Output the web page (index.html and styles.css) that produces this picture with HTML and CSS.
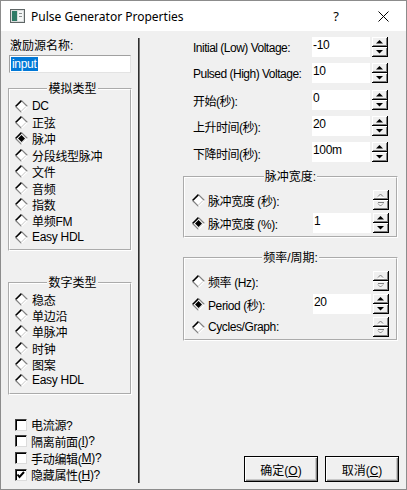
FILE: index.html
```html
<!DOCTYPE html>
<html lang="zh">
<head>
  <meta charset="UTF-8" />
  <title>Pulse Generator Properties</title>
  <link rel="stylesheet" href="styles.css">
</head>
<body>
  <svg width="0" height="0" class="defs">
    <symbol id="dia" viewBox="0 0 13 13">
      <polygon points="6.5,1 12,6.5 6.5,12 1,6.5" fill="#fff" />
      <line x1="0.6" y1="6.5" x2="6.5" y2="0.6" stroke="#000" stroke-width="1.6" />
      <line x1="6.5" y1="0.6" x2="12.4" y2="6.5" stroke="#808080" stroke-width="1.2" />
      <line x1="0.6" y1="6.5" x2="6.5" y2="12.4" stroke="#808080" stroke-width="1.2" />
      <line x1="6.5" y1="12.4" x2="12.4" y2="6.5" stroke="#fff" stroke-width="1.2" />
      <line x1="6.5" y1="11" x2="11" y2="6.5" stroke="#c8c8c8" stroke-width="1" />
    </symbol>
    <symbol id="dia-on" viewBox="0 0 13 13">
      <use href="#dia" />
      <polygon points="6.5,3 10,6.5 6.5,10 3,6.5" fill="#000" />
    </symbol>
    <symbol id="spin-on" viewBox="0 0 16 20">
      <rect x="0" y="0" width="16" height="20" fill="#000" />
      <rect x="0" y="0" width="15" height="9" fill="#fff" />
      <rect x="1" y="1" width="14" height="8" fill="#808080" />
      <rect x="1" y="1" width="13" height="7" fill="#f0f0f0" />
      <rect x="0" y="10" width="15" height="9" fill="#fff" />
      <rect x="1" y="11" width="14" height="8" fill="#808080" />
      <rect x="1" y="11" width="13" height="7" fill="#f0f0f0" />
      <polygon points="4,6.5 11,6.5 7.5,3" fill="#000" />
      <polygon points="4,13 11,13 7.5,16.5" fill="#000" />
    </symbol>
    <symbol id="spin-off" viewBox="0 0 16 20">
      <rect x="0" y="0" width="16" height="20" fill="#000" />
      <rect x="0" y="0" width="15" height="9" fill="#fff" />
      <rect x="1" y="1" width="14" height="8" fill="#808080" />
      <rect x="1" y="1" width="13" height="7" fill="#f0f0f0" />
      <rect x="0" y="10" width="15" height="9" fill="#fff" />
      <rect x="1" y="11" width="14" height="8" fill="#808080" />
      <rect x="1" y="11" width="13" height="7" fill="#f0f0f0" />
      <polyline points="5,6.5 7.5,4 10,6.5" fill="none" stroke="#808080" />
      <polyline points="5,13.5 7.5,16 10,13.5" fill="none" stroke="#808080" />
      <line x1="5" y1="7.5" x2="11" y2="7.5" stroke="#fff" />
      <line x1="5" y1="12.5" x2="11" y2="12.5" stroke="#808080" />
      <polyline points="6,13.5 7.5,15 9,13.5" fill="none" stroke="#fff" stroke-width="0.8" />
    </symbol>
  </svg>

  <div class="window">
    <div class="titlebar">
      <svg class="app-icon" width="15" height="14" viewBox="0 0 15 14">
        <rect x="0.5" y="0.5" width="14" height="13" fill="#d8dcdc" stroke="#5f6666" />
        <rect x="2" y="2" width="5" height="10" fill="#2f7a66" />
        <rect x="8" y="2" width="5" height="10" fill="#f4f6f6" />
        <rect x="9" y="4" width="3" height="1" fill="#8a9090" />
        <rect x="9" y="7" width="3" height="1" fill="#8a9090" />
      </svg>
      <span class="title">Pulse Generator Properties</span>
      <span class="help">?</span>
      <svg class="close" width="11" height="11" viewBox="0 0 11 11">
        <path d="M0.5 0.5 L10.5 10.5 M10.5 0.5 L0.5 10.5" stroke="#000" stroke-width="1" />
      </svg>
    </div>

    <div class="client">
      <div class="left">
        <div class="name-label">激励源名称:</div>
        <div class="name-box"><span class="sel">input</span></div>

        <fieldset class="group analog">
          <legend>模拟类型</legend>
          <div class="opt"><svg class="dia"><use href="#dia" /></svg>DC</div>
          <div class="opt"><svg class="dia"><use href="#dia" /></svg>正弦</div>
          <div class="opt"><svg class="dia"><use href="#dia-on" /></svg>脉冲</div>
          <div class="opt"><svg class="dia"><use href="#dia" /></svg>分段线型脉冲</div>
          <div class="opt"><svg class="dia"><use href="#dia" /></svg>文件</div>
          <div class="opt"><svg class="dia"><use href="#dia" /></svg>音频</div>
          <div class="opt"><svg class="dia"><use href="#dia" /></svg>指数</div>
          <div class="opt"><svg class="dia"><use href="#dia" /></svg>单频FM</div>
          <div class="opt"><svg class="dia"><use href="#dia" /></svg>Easy HDL</div>
        </fieldset>

        <fieldset class="group digital">
          <legend>数字类型</legend>
          <div class="opt"><svg class="dia"><use href="#dia" /></svg>稳态</div>
          <div class="opt"><svg class="dia"><use href="#dia" /></svg>单边沿</div>
          <div class="opt"><svg class="dia"><use href="#dia" /></svg>单脉冲</div>
          <div class="opt"><svg class="dia"><use href="#dia" /></svg>时钟</div>
          <div class="opt"><svg class="dia"><use href="#dia" /></svg>图案</div>
          <div class="opt"><svg class="dia"><use href="#dia" /></svg>Easy HDL</div>
        </fieldset>

        <div class="checks">
          <div class="check"><span class="box"></span>电流源?</div>
          <div class="check"><span class="box"></span>隔离前面(<u>I</u>)?</div>
          <div class="check"><span class="box"></span>手动编辑(<u>M</u>)?</div>
          <div class="check"><span class="box checked">
            <svg width="12" height="12" viewBox="0 0 12 12"><polyline points="2.5,5.5 4.5,8 9,3" fill="none" stroke="#000" stroke-width="2" /></svg>
          </span>隐藏属性(<u>H</u>)?</div>
        </div>
      </div>

      <div class="sep"></div>

      <div class="right">
        <div class="params">
          <div class="prow"><span class="plabel">Initial (Low) Voltage:</span><span class="field">-10</span><svg class="spin"><use href="#spin-on" /></svg></div>
          <div class="prow"><span class="plabel">Pulsed (High) Voltage:</span><span class="field">10</span><svg class="spin"><use href="#spin-on" /></svg></div>
          <div class="prow"><span class="plabel">开始(秒):</span><span class="field">0</span><svg class="spin"><use href="#spin-on" /></svg></div>
          <div class="prow"><span class="plabel">上升时间(秒):</span><span class="field">20</span><svg class="spin"><use href="#spin-on" /></svg></div>
          <div class="prow"><span class="plabel">下降时间(秒):</span><span class="field">100m</span><svg class="spin"><use href="#spin-on" /></svg></div>
        </div>

        <fieldset class="group pw">
          <legend>脉冲宽度:</legend>
          <div class="grow"><svg class="dia"><use href="#dia" /></svg><span class="glabel">脉冲宽度 (秒):</span><svg class="spin"><use href="#spin-off" /></svg></div>
          <div class="grow"><svg class="dia"><use href="#dia-on" /></svg><span class="glabel">脉冲宽度 (%):</span><span class="field">1</span><svg class="spin"><use href="#spin-on" /></svg></div>
        </fieldset>

        <fieldset class="group freq">
          <legend>频率/周期:</legend>
          <div class="grow"><svg class="dia"><use href="#dia" /></svg><span class="glabel">频率 (Hz):</span><svg class="spin"><use href="#spin-off" /></svg></div>
          <div class="grow"><svg class="dia"><use href="#dia-on" /></svg><span class="glabel">Period (秒):</span><span class="field">20</span><svg class="spin"><use href="#spin-on" /></svg></div>
          <div class="grow"><svg class="dia"><use href="#dia" /></svg><span class="glabel">Cycles/Graph:</span><svg class="spin"><use href="#spin-off" /></svg></div>
        </fieldset>

        <div class="buttons">
          <button class="btn">确定(<u>O</u>)</button>
          <button class="btn">取消(<u>C</u>)</button>
        </div>
      </div>
    </div>
  </div>
</body>
</html>
```

FILE: styles.css
```css
body {
  margin: 0;
  font-family: "Liberation Sans", "Noto Sans CJK SC", sans-serif;
  font-size: 12px;
  color: #000;
  background: #f0f0f0;
}
.defs {
  position: absolute;
}
.window {
  width: 407px;
  height: 490px;
  box-sizing: border-box;
  border: 1px solid #8c8c8c;
  background: #f0f0f0;
  display: flex;
  flex-direction: column;
}
.titlebar {
  flex: none;
  height: 30px;
  background: #fff;
  display: flex;
  align-items: center;
  font-family: "Noto Sans", sans-serif;
}
.app-icon {
  margin-left: 9px;
  margin-right: 6px;
}
.title {
  font-size: 12px;
}
.help {
  margin-left: auto;
  font-size: 13px;
  margin-right: 39px;
}
.close {
  margin-right: 17px;
}
.client {
  flex: 1;
  display: flex;
}

/* left column */
.left {
  width: 137px;
  box-sizing: border-box;
  padding: 8px 0 0 8px;
}
.name-label {
  line-height: 14px;
  padding-left: 1px;
}
.name-box {
  margin-top: 2px;
  width: 122px;
  height: 18px;
  box-sizing: border-box;
  background: #fff;
  border: 1px solid;
  border-color: #a0a0a0 #e3e3e3 #e3e3e3 #a0a0a0;
  padding: 1px 1px;
}
.sel {
  display: inline-block;
  background: #0078d7;
  color: #fff;
  line-height: 14px;
  padding: 0 1px;
  letter-spacing: -0.3px;
}
.group {
  margin: 0;
  border: 2px groove #fff;
  min-width: 0;
}
.group legend {
  margin: 0 auto;
  padding: 0 1px;
  line-height: 14px;
}
.analog {
  margin: 9px 0 0 -1px;
  width: 124px;
  box-sizing: border-box;
  padding: 2px 0 4px 5px;
}
.analog .opt {
  height: 16.375px;
}
.digital {
  margin: 25px 0 0 -1px;
  width: 124px;
  box-sizing: border-box;
  padding: 1px 0 4px 5px;
}
.digital .opt {
  height: 16.2px;
}
.opt {
  display: flex;
  align-items: center;
  letter-spacing: -0.3px;
}
.dia {
  width: 13px;
  height: 13px;
  margin-right: 4px;
  flex: none;
}
.checks {
  margin-top: 22px;
  padding-left: 6px;
}
.check {
  height: 16.67px;
  display: flex;
  align-items: center;
  letter-spacing: -0.3px;
}
.box {
  width: 12px;
  height: 12px;
  box-sizing: border-box;
  background: #fff;
  border: 1px solid;
  border-color: #404040 #dcdcdc #dcdcdc #404040;
  box-shadow: inset 1px 1px 0 #000;
  margin-right: 4px;
  display: flex;
  align-items: center;
  justify-content: center;
}
.box svg {
  flex: none;
}

/* separator */
.sep {
  width: 0;
  margin: 7px 0 6px;
  border-left: 1px solid #2e2e2e;
  border-right: 1px solid #7a7a7a;
}

/* right column */
.right {
  flex: 1;
  display: flex;
  flex-direction: column;
  padding: 6px 7px 7px 0;
}
.params {
  padding-left: 53px;
}
.prow {
  display: flex;
  align-items: center;
  height: 20px;
  margin-bottom: 6.25px;
}
.plabel {
  width: 119px;
  padding-top: 2px;
  letter-spacing: -0.5px;
  white-space: nowrap;
}
.field {
  width: 58px;
  height: 20px;
  box-sizing: border-box;
  background: #fff;
  padding: 1px 1px;
  line-height: 14px;
  margin-right: 2px;
  letter-spacing: -0.3px;
}
.spin {
  width: 16px;
  height: 20px;
  flex: none;
}
.pw {
  margin: 1.75px 0 0 43px;
  width: 215px;
  box-sizing: border-box;
  padding: 6px 7px 3px 7px;
}
.freq {
  margin: 13px 0 0 43px;
  width: 215px;
  box-sizing: border-box;
  padding: 6px 7px 2px 7px;
}
.grow {
  display: flex;
  align-items: center;
  height: 20px;
  margin-bottom: 3px;
}
.grow:last-child {
  margin-bottom: 0;
}
.glabel {
  flex: 1;
  letter-spacing: -0.4px;
  white-space: nowrap;
}
.grow .dia {
  margin-right: 3px;
}
.buttons {
  margin-top: auto;
  display: flex;
  justify-content: flex-end;
  gap: 7px;
}
.btn {
  width: 74px;
  height: 26px;
  font: inherit;
  background: #f0f0f0;
  border: 1px solid #000;
  box-shadow: inset 1px 1px 0 #fff, inset -1px -1px 0 #808080, inset -2px -2px 0 #c8c8c8;
  padding: 0;
  color: #000;
}
```
